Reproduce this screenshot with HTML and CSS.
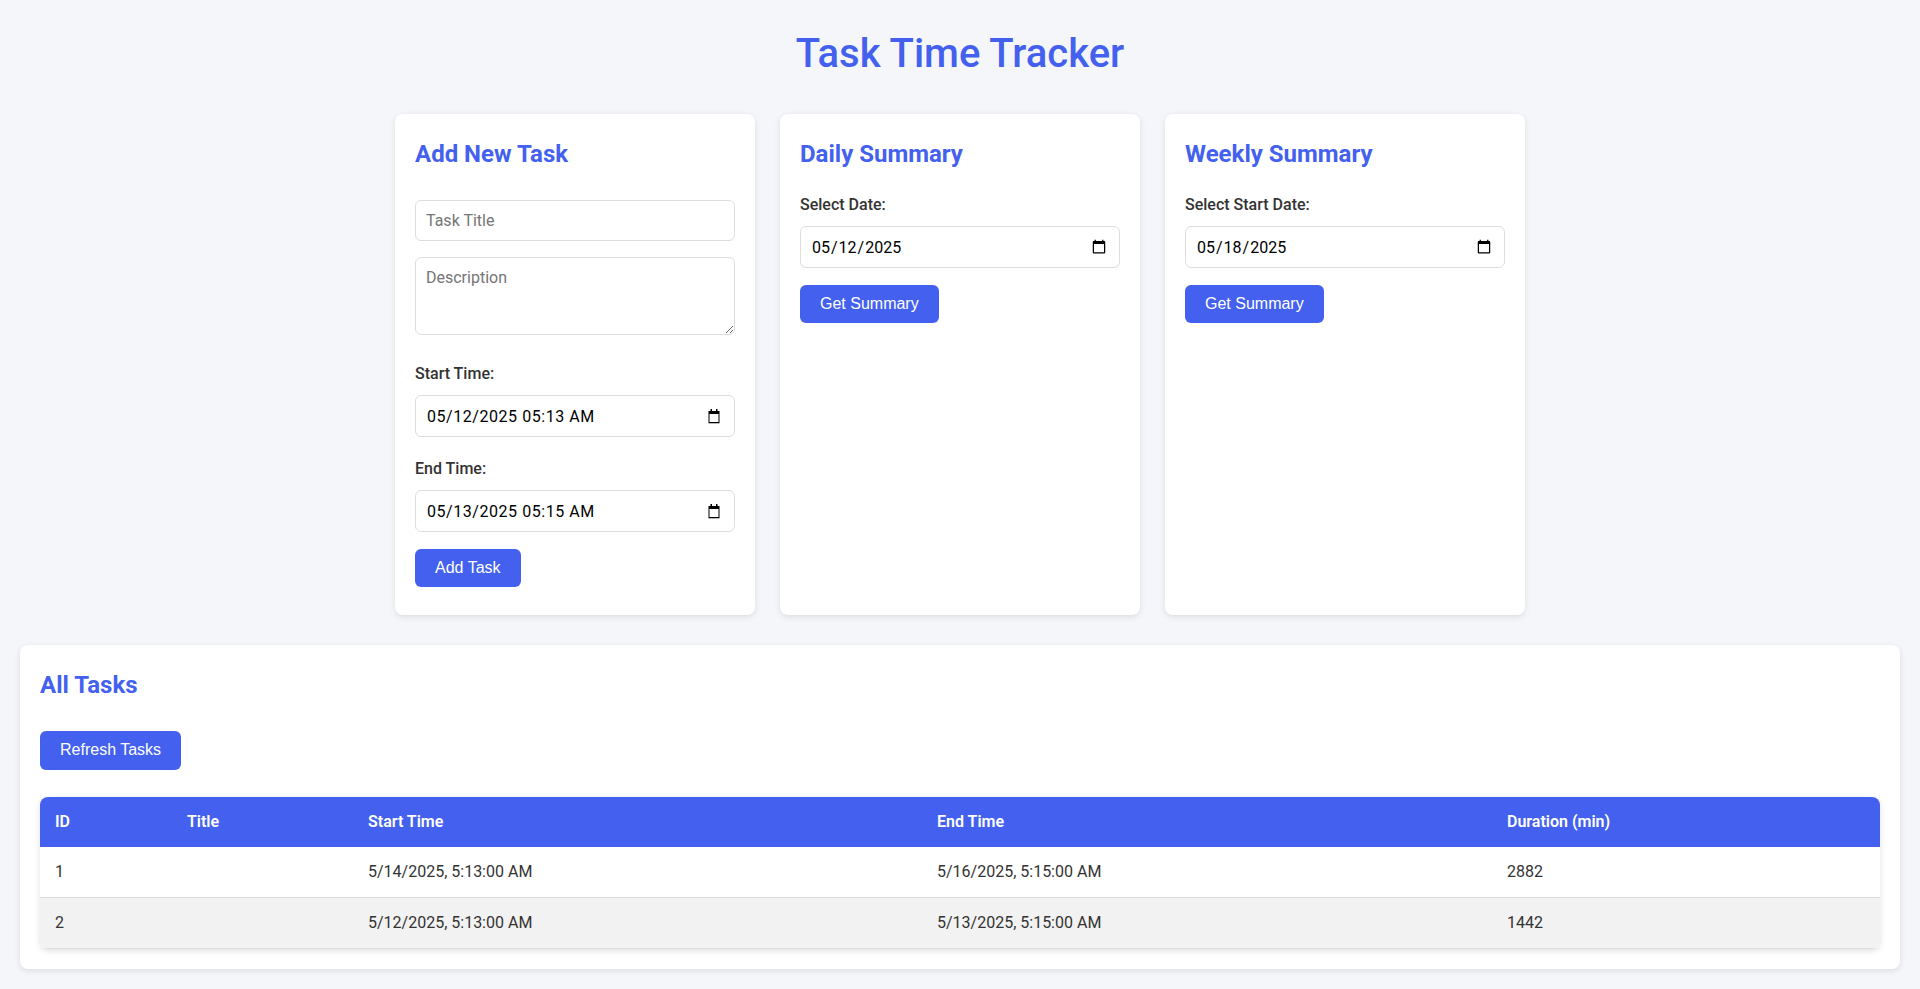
FILE: index.html
```html
<!DOCTYPE html>
<html lang="en">
<head>
<meta charset="utf-8">
<title>Task Time Tracker</title>
<link rel="stylesheet" href="styles.css">
</head>
<body>
<h1 class="app-title">Task Time Tracker</h1>

<div class="top-row">
  <section class="card">
    <h2 class="card-title">Add New Task</h2>
    <form class="task-form">
      <input class="field field-title" type="text" placeholder="Task Title">
      <textarea class="field field-desc" placeholder="Description"></textarea>
      <label class="field-label">Start Time:</label>
      <div class="dt-wrap field-gap">
        <input class="field field-date field-dt" type="text" value="05/12/2025 05:13 AM">
        <svg class="cal-icon" viewBox="0 0 12 16" width="12" height="16" aria-hidden="true">
          <path fill="#000" fill-rule="evenodd" d="M0.5 3h11v12h-11z M1.5 6h9v8h-9z"/>
          <path fill="#000" d="M2.5 1h1.5v2.5h-1.5z M8 1h1.5v2.5h-1.5z"/>
          <path fill="#888" d="M0.5 15h11v0.6h-11z"/>
        </svg>
      </div>
      <label class="field-label">End Time:</label>
      <div class="dt-wrap field-last">
        <input class="field field-date field-dt" type="text" value="05/13/2025 05:15 AM">
        <svg class="cal-icon" viewBox="0 0 12 16" width="12" height="16" aria-hidden="true">
          <path fill="#000" fill-rule="evenodd" d="M0.5 3h11v12h-11z M1.5 6h9v8h-9z"/>
          <path fill="#000" d="M2.5 1h1.5v2.5h-1.5z M8 1h1.5v2.5h-1.5z"/>
          <path fill="#888" d="M0.5 15h11v0.6h-11z"/>
        </svg>
      </div>
      <button class="btn" type="button">Add Task</button>
    </form>
  </section>

  <section class="card">
    <h2 class="card-title">Daily Summary</h2>
    <label class="field-label label-summary">Select Date:</label>
    <input class="field field-date field-last" type="date" value="2025-05-12">
    <button class="btn" type="button">Get Summary</button>
  </section>

  <section class="card">
    <h2 class="card-title">Weekly Summary</h2>
    <label class="field-label label-summary">Select Start Date:</label>
    <input class="field field-date field-last" type="date" value="2025-05-18">
    <button class="btn" type="button">Get Summary</button>
  </section>
</div>

<section class="card card-wide">
  <h2 class="card-title">All Tasks</h2>
  <button class="btn btn-refresh" type="button">Refresh Tasks</button>
  <table class="task-table">
    <colgroup>
      <col class="col-id">
      <col class="col-title">
      <col class="col-start">
      <col class="col-end">
      <col class="col-dur">
    </colgroup>
    <thead>
      <tr><th>ID</th><th>Title</th><th>Start Time</th><th>End Time</th><th>Duration (min)</th></tr>
    </thead>
    <tbody>
      <tr><td>1</td><td></td><td>5/14/2025, 5:13:00 AM</td><td>5/16/2025, 5:15:00 AM</td><td>2882</td></tr>
      <tr><td>2</td><td></td><td>5/12/2025, 5:13:00 AM</td><td>5/13/2025, 5:15:00 AM</td><td>1442</td></tr>
    </tbody>
  </table>
</section>
</body>
</html>
```

FILE: styles.css
```css
* { box-sizing: border-box; }

body {
  margin: 0;
  padding: 0 20px 20px;
  background: #f5f6fa;
  color: #333;
  font-family: Roboto, "Liberation Sans", Arial, sans-serif;
  font-size: 16px;
}

.app-title {
  margin: 30px 0 37px;
  text-align: center;
  color: #4361ee;
  font-size: 40px;
  font-weight: 500;
  line-height: 47px;
}

.top-row {
  display: flex;
  justify-content: center;
  gap: 25px;
  margin-bottom: 30px;
}

.card {
  width: 360px;
  background: #fff;
  border-radius: 8px;
  padding: 20px 20px 28px;
  box-shadow: 0 2px 6px rgba(0, 0, 0, 0.1);
}

.card-wide {
  width: auto;
  padding: 20px;
}

.card-title {
  margin: 0 0 20px;
  color: #4361ee;
  font-size: 24px;
  font-weight: 700;
  line-height: 41px;
}

.task-form {
  padding-top: 5px;
}

.field {
  display: block;
  width: 100%;
  padding: 10px;
  border: 1px solid #ddd;
  border-radius: 6px;
  background: #fff;
  font-family: inherit;
  font-size: 16px;
  line-height: normal;
  color: #000;
}

.field-title { margin-bottom: 16px; }

.field-desc {
  height: 78px;
  margin-bottom: 29px;
  resize: vertical;
}

.field-date { height: 42px; }

.field-dt {
  padding-left: 11px;
  letter-spacing: 0.55px;
}

.dt-wrap {
  position: relative;
}

.cal-icon {
  position: absolute;
  right: 15px;
  top: 13px;
}

.field-gap { margin-bottom: 22px; }

.field-last { margin-bottom: 17px; }

.field-label {
  display: block;
  margin-bottom: 12px;
  font-weight: 500;
  line-height: 19px;
  color: #333;
}

.label-summary { margin-bottom: 12px; }

.btn {
  display: inline-block;
  padding: 10px 20px;
  border: none;
  border-radius: 6px;
  background: #4361ee;
  color: #fff;
  font-family: "Liberation Sans", Arial, sans-serif;
  font-size: 16px;
  line-height: 18.4px;
  cursor: pointer;
}

.btn-refresh {
  margin-top: 5px;
}

.task-table {
  width: 100%;
  margin-top: 27px;
  border-collapse: collapse;
  table-layout: fixed;
  border-radius: 8px;
  overflow: hidden;
  box-shadow: 0 2px 6px rgba(0, 0, 0, 0.12);
}

.col-id { width: 132px; }
.col-title { width: 181px; }
.col-start { width: 569px; }
.col-end { width: 570px; }
.col-dur { width: 388px; }

.task-table th,
.task-table td {
  padding: 15px;
  text-align: left;
  line-height: 20px;
}

.task-table th {
  background: #4361ee;
  color: #fff;
  font-weight: 600;
}

.task-table td {
  border-bottom: 1px solid #ddd;
  color: #333;
}

.task-table tbody tr:nth-child(even) td {
  background: #f2f2f2;
}
```
